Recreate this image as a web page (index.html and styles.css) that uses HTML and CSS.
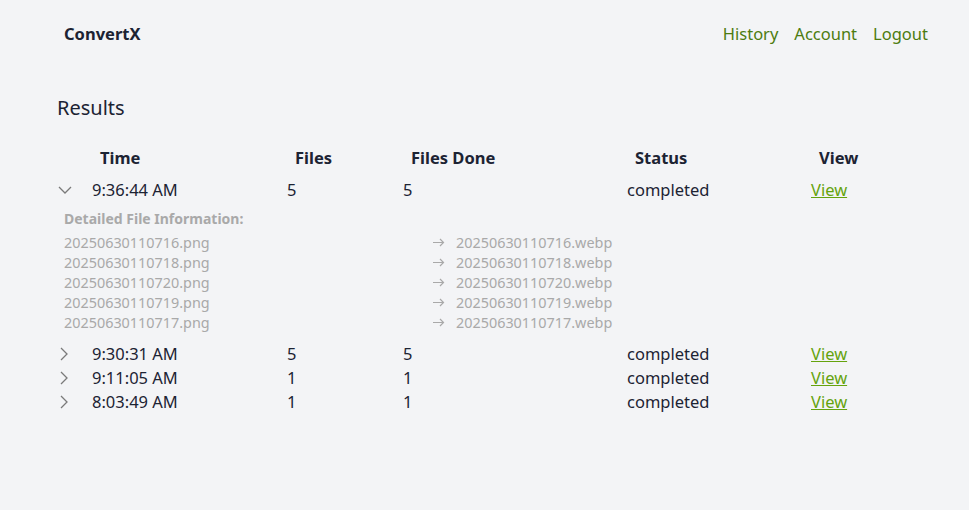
FILE: index.html
```html
<!DOCTYPE html>
<html lang="en">
<head>
<meta charset="utf-8">
<title>ConvertX | Results</title>
<link rel="stylesheet" href="styles.css">
</head>
<body>
<header class="topbar">
  <a class="brand" href="#">ConvertX</a>
  <nav class="nav">
    <a href="#">History</a>
    <a href="#">Account</a>
    <a href="#">Logout</a>
  </nav>
</header>
<main class="main">
  <h1 class="title">Results</h1>
  <table class="results">
    <colgroup>
      <col class="c-toggle"><col class="c-time"><col class="c-files"><col class="c-done"><col class="c-status"><col class="c-view">
    </colgroup>
    <thead>
      <tr><th></th><th>Time</th><th>Files</th><th>Files Done</th><th>Status</th><th>View</th></tr>
    </thead>
    <tbody>
      <tr class="row">
        <td class="toggle"><svg width="14" height="8" viewBox="0 0 14 8"><path d="M1 1l6 6 6-6" fill="none" stroke="#7a7a7a" stroke-width="1.3"/></svg></td>
        <td>9:36:44 AM</td><td>5</td><td>5</td><td>completed</td><td><a class="view" href="#">View</a></td>
      </tr>
      <tr class="detail">
        <td colspan="6">
          <div class="detail-box">
            <div class="detail-title">Detailed File Information:</div>
            <div class="detail-grid">
              <span>20250630110716.png</span><span><svg class="arrow" width="12" height="9" viewBox="0 0 12 9"><path d="M0 4.5h10.5M7 1l3.5 3.5L7 8" fill="none" stroke="#a9a9a9" stroke-width="1.2"/></svg>20250630110716.webp</span>
              <span>20250630110718.png</span><span><svg class="arrow" width="12" height="9" viewBox="0 0 12 9"><path d="M0 4.5h10.5M7 1l3.5 3.5L7 8" fill="none" stroke="#a9a9a9" stroke-width="1.2"/></svg>20250630110718.webp</span>
              <span>20250630110720.png</span><span><svg class="arrow" width="12" height="9" viewBox="0 0 12 9"><path d="M0 4.5h10.5M7 1l3.5 3.5L7 8" fill="none" stroke="#a9a9a9" stroke-width="1.2"/></svg>20250630110720.webp</span>
              <span>20250630110719.png</span><span><svg class="arrow" width="12" height="9" viewBox="0 0 12 9"><path d="M0 4.5h10.5M7 1l3.5 3.5L7 8" fill="none" stroke="#a9a9a9" stroke-width="1.2"/></svg>20250630110719.webp</span>
              <span>20250630110717.png</span><span><svg class="arrow" width="12" height="9" viewBox="0 0 12 9"><path d="M0 4.5h10.5M7 1l3.5 3.5L7 8" fill="none" stroke="#a9a9a9" stroke-width="1.2"/></svg>20250630110717.webp</span>
            </div>
          </div>
        </td>
      </tr>
      <tr class="row">
        <td class="toggle"><svg width="8" height="14" viewBox="0 0 8 14"><path d="M1 1l6 6-6 6" fill="none" stroke="#7a7a7a" stroke-width="1.3"/></svg></td>
        <td>9:30:31 AM</td><td>5</td><td>5</td><td>completed</td><td><a class="view" href="#">View</a></td>
      </tr>
      <tr class="row">
        <td class="toggle"><svg width="8" height="14" viewBox="0 0 8 14"><path d="M1 1l6 6-6 6" fill="none" stroke="#7a7a7a" stroke-width="1.3"/></svg></td>
        <td>9:11:05 AM</td><td>1</td><td>1</td><td>completed</td><td><a class="view" href="#">View</a></td>
      </tr>
      <tr class="row">
        <td class="toggle"><svg width="8" height="14" viewBox="0 0 8 14"><path d="M1 1l6 6-6 6" fill="none" stroke="#7a7a7a" stroke-width="1.3"/></svg></td>
        <td>8:03:49 AM</td><td>1</td><td>1</td><td>completed</td><td><a class="view" href="#">View</a></td>
      </tr>
    </tbody>
  </table>
</main>
</body>
</html>
```
FILE: styles.css
```css
* { box-sizing: border-box; }
html, body { margin: 0; padding: 0; }
body {
  background: #f3f4f6;
  color: #1c2333;
  font-family: "Noto Sans", "Open Sans", sans-serif;
  font-size: 16.5px;
  line-height: 24px;
  width: 969px;
  height: 510px;
  overflow: hidden;
}
.topbar {
  height: 68px;
  display: flex;
  align-items: center;
  justify-content: space-between;
  padding: 0 41px 0 64px;
}
.brand {
  font-weight: 700;
  font-size: 16.5px;
  color: #1c2333;
  text-decoration: none;
}
.nav { display: flex; gap: 16px; }
.nav a {
  color: #4d7c0f;
  text-decoration: none;
  font-size: 16.5px;
}
.main { padding: 26px 48px 0 48px; }
.title {
  margin: 0 0 16px 9px;
  font-size: 20px;
  font-weight: 400;
  line-height: 28px;
}
.results {
  border-collapse: collapse;
  table-layout: fixed;
  width: 873px;
}
.c-toggle { width: 36px; }
.c-time { width: 195px; }
.c-files { width: 116px; }
.c-done { width: 224px; }
.c-status { width: 184px; }
.c-view { width: 118px; }
.results th {
  text-align: left;
  font-weight: 700;
  line-height: 24px;
  padding: 8px 16px;
}
.results td {
  padding: 0 8px;
  line-height: 24px;
  height: 24px;
  vertical-align: middle;
}
.results td.toggle {
  padding: 0 0 0 10px;
  line-height: 0;
}
.row td.toggle svg { display: inline-block; }
tr.row:not(:first-child) td.toggle { padding-left: 12px; }
.view {
  color: #65a30d;
  text-decoration: underline;
}
.results tr.detail td { padding: 7px 0 9px 16px; }
.detail-box { color: #a9a9a9; font-size: 14.4px; line-height: 20px; }
.detail-title { font-weight: 700; margin-bottom: 4px; font-size: 14px; }
.detail-grid {
  display: grid;
  grid-template-columns: 369px 1fr;
  grid-auto-rows: 20px;
}
.arrow {
  display: inline-block;
  vertical-align: middle;
  margin: -3px 11px 0 0;
}
```
